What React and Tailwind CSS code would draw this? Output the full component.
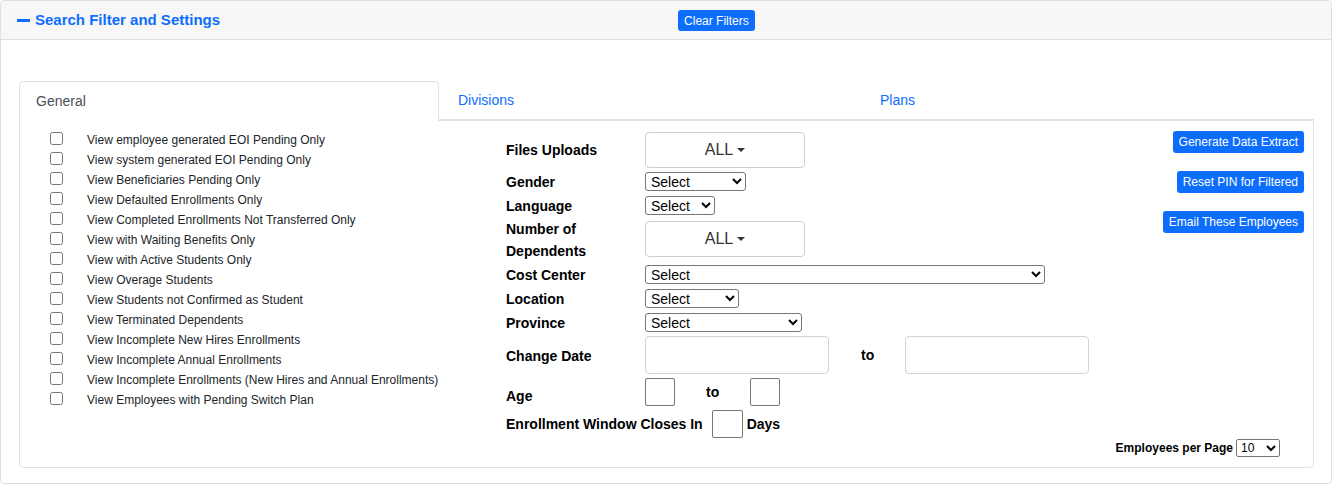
import { useState } from 'react';

const checks = [
  'View employee generated EOI Pending Only',
  'View system generated EOI Pending Only',
  'View Beneficiaries Pending Only',
  'View Defaulted Enrollments Only',
  'View Completed Enrollments Not Transferred Only',
  'View with Waiting Benefits Only',
  'View with Active Students Only',
  'View Overage Students',
  'View Students not Confirmed as Student',
  'View Terminated Dependents',
  'View Incomplete New Hires Enrollments',
  'View Incomplete Annual Enrollments',
  'View Incomplete Enrollments (New Hires and Annual Enrollments)',
  'View Employees with Pending Switch Plan',
];

function AllBox() {
  return (
    <button className="w-[160px] h-[36px] border border-[#cfcfcf] rounded-[4px] bg-white flex items-center justify-center gap-[4px] text-[16px] text-[#333]">
      <span>ALL</span>
      <span className="w-0 h-0 border-x-[4px] border-x-transparent border-t-[4px] border-t-[#333]" />
    </button>
  );
}

function Sel({ w }) {
  return (
    <select className={`${w} h-[19px] border border-[#767676] rounded-[3px] text-[14px] leading-[15px] pl-[1px] bg-white text-black`}>
      <option>Select</option>
    </select>
  );
}

function Label({ children, className = '' }) {
  return <div className={`w-[139px] shrink-0 font-bold text-[14px] leading-[22px] text-black ${className}`}>{children}</div>;
}

export default function App() {
  const [tab, setTab] = useState('general');

  return (
    <div className="font-['Liberation_Sans',Arial,sans-serif] w-[1332px] h-[485px] bg-white">
      <div className="border border-[#dfdfdf] rounded-[4px] h-[484px]">
        <div className="h-[39px] bg-[#f7f7f7] border-b border-[#dfdfdf] rounded-t-[4px] flex items-center">
          <div className="flex items-center pl-[16px] text-[#0d6efd] font-bold text-[15px]">
            <span className="w-[13px] h-[3px] bg-[#0d6efd] mr-[5px]" />
            Search Filter and Settings
          </div>
          <button className="ml-[458px] h-[21px] px-[6px] bg-[#0d6efd] text-white text-[12px] rounded-[3px] mt-[1px]">
            Clear Filters
          </button>
        </div>

        <div className="pt-[41px] pl-[18px] pr-[17px]">
          <div className="flex h-[40px] text-[14px]">
            <button
              onClick={() => setTab('general')}
              className="w-[420px] border border-[#dee2e6] border-b-0 rounded-t-[5px] bg-white text-left pl-[16px] text-[#495057]"
            >
              General
            </button>
            <div className="flex-1 flex border-b-[2px] border-[#dee2e6]">
              <button onClick={() => setTab('divisions')} className="w-[441px] text-left pl-[19px] pt-[1px] text-[#0d6efd]">
                Divisions
              </button>
              <button onClick={() => setTab('plans')} className="text-left pt-[1px] text-[#0d6efd]">
                Plans
              </button>
            </div>
          </div>

          <div className="h-[347px] border border-t-0 border-[#dee2e6] rounded-b-[5px] flex">
            <div className="w-[486px] shrink-0 pl-[30px] pt-[9px]">
              {checks.map((c) => (
                <label key={c} className="flex items-start h-[20px] text-[12px] leading-[20px] text-[#212529]">
                  <input type="checkbox" className="w-[13px] h-[13px] mt-[2px] shrink-0" />
                  <span className="ml-[24px]">{c}</span>
                </label>
              ))}
            </div>

            <div className="w-[600px] shrink-0 pt-[11px]">
              <div className="flex items-center h-[36px]">
                <Label>Files Uploads</Label>
                <AllBox />
              </div>
              <div className="flex items-center h-[24px] mt-[1px]">
                <Label className="mt-[1px]">Gender</Label>
                <Sel w="w-[101px]" />
              </div>
              <div className="flex items-center h-[24px]">
                <Label className="mt-[1px]">Language</Label>
                <Sel w="w-[70px]" />
              </div>
              <div className="flex items-center h-[44px]">
                <Label className="mt-[1px]">
                  Number of
                  <br />
                  Dependents
                </Label>
                <AllBox />
              </div>
              <div className="flex items-center h-[24px] mt-[1px]">
                <Label className="mt-[1px]">Cost Center</Label>
                <Sel w="w-[400px]" />
              </div>
              <div className="flex items-center h-[24px]">
                <Label className="mt-[1px]">Location</Label>
                <Sel w="w-[94px]" />
              </div>
              <div className="flex items-center h-[24px]">
                <Label className="mt-[1px]">Province</Label>
                <Sel w="w-[157px]" />
              </div>
              <div className="flex items-center h-[42px]">
                <Label className="mt-[1px]">Change Date</Label>
                <input className="w-[184px] h-[38px] border border-[#ced4da] rounded-[4px]" />
                <span className="ml-[32px] w-[44px] font-bold text-[14px]">to</span>
                <input className="w-[184px] h-[38px] border border-[#ced4da] rounded-[4px]" />
              </div>
              <div className="flex items-center h-[32px]">
                <Label className="mt-[8px]">Age</Label>
                <input className="w-[30px] h-[28px] border border-[#767676] rounded-[2px]" />
                <span className="ml-[31px] w-[44px] font-bold text-[14px]">to</span>
                <input className="w-[30px] h-[28px] border border-[#767676] rounded-[2px]" />
              </div>
              <div className="flex items-center h-[31px]">
                <div className="font-bold text-[14px] text-black mt-[1px]">Enrollment Window Closes In</div>
                <input className="ml-[9px] w-[31px] h-[28px] border border-[#767676] rounded-[2px]" />
                <span className="ml-[4px] font-bold text-[14px] mt-[1px]">Days</span>
              </div>
            </div>

            <div className="flex-1 flex flex-col items-end pt-[10px]">
              <div className="flex flex-col items-end gap-[18px] pr-[9px] text-[12px] text-white">
                <button className="h-[22px] px-[6px] bg-[#0d6efd] rounded-[3px]">Generate Data Extract</button>
                <button className="h-[22px] px-[6px] bg-[#0d6efd] rounded-[3px]">Reset PIN for Filtered</button>
                <button className="h-[22px] px-[6px] bg-[#0d6efd] rounded-[3px]">Email These Employees</button>
              </div>
              <div className="mt-auto mb-[10px] pr-[33px] flex items-center gap-[3px] whitespace-nowrap text-[12px] font-bold text-black">
                <span>Employees per Page</span>
                <select className="w-[44px] h-[18px] border border-[#767676] rounded-[2px] text-[12px] leading-[14px] font-normal bg-white">
                  <option>10</option>
                </select>
              </div>
            </div>
          </div>
        </div>
      </div>
    </div>
  );
}
